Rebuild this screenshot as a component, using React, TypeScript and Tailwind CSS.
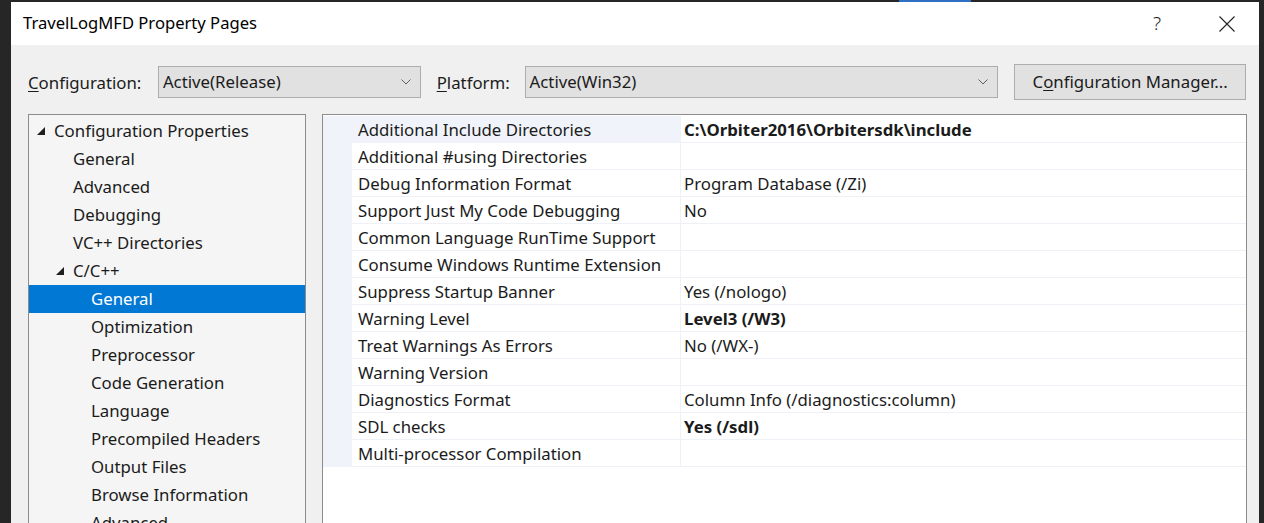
import React from 'react'

const font = { fontFamily: '"Noto Sans", "Open Sans", sans-serif' }

type TreeItem = { label: string; level: number; expanded?: boolean; selected?: boolean }

const tree: TreeItem[] = [
  { label: 'Configuration Properties', level: 0, expanded: true },
  { label: 'General', level: 1 },
  { label: 'Advanced', level: 1 },
  { label: 'Debugging', level: 1 },
  { label: 'VC++ Directories', level: 1 },
  { label: 'C/C++', level: 1, expanded: true },
  { label: 'General', level: 2, selected: true },
  { label: 'Optimization', level: 2 },
  { label: 'Preprocessor', level: 2 },
  { label: 'Code Generation', level: 2 },
  { label: 'Language', level: 2 },
  { label: 'Precompiled Headers', level: 2 },
  { label: 'Output Files', level: 2 },
  { label: 'Browse Information', level: 2 },
  { label: 'Advanced', level: 2 },
]

const props = [
  { name: 'Additional Include Directories', value: 'C:\\Orbiter2016\\Orbitersdk\\include', bold: true, active: true },
  { name: 'Additional #using Directories', value: '' },
  { name: 'Debug Information Format', value: 'Program Database (/Zi)' },
  { name: 'Support Just My Code Debugging', value: 'No' },
  { name: 'Common Language RunTime Support', value: '' },
  { name: 'Consume Windows Runtime Extension', value: '' },
  { name: 'Suppress Startup Banner', value: 'Yes (/nologo)' },
  { name: 'Warning Level', value: 'Level3 (/W3)', bold: true },
  { name: 'Treat Warnings As Errors', value: 'No (/WX-)' },
  { name: 'Warning Version', value: '' },
  { name: 'Diagnostics Format', value: 'Column Info (/diagnostics:column)' },
  { name: 'SDL checks', value: 'Yes (/sdl)', bold: true },
  { name: 'Multi-processor Compilation', value: '' },
]

function Chevron() {
  return (
    <svg width="10" height="6" viewBox="0 0 10 6" className="shrink-0">
      <path d="M0.5 0.5 L5 5 L9.5 0.5" fill="none" stroke="#606060" strokeWidth="1" />
    </svg>
  )
}

function Expander() {
  return (
    <svg width="8" height="8" viewBox="0 0 8 8" className="shrink-0">
      <path d="M8 0 L8 8 L0 8 Z" fill="#1e1e1e" />
    </svg>
  )
}

function Combo({ text, width }: { text: string; width: string }) {
  return (
    <div className={`flex h-[32px] ${width} items-center justify-between border border-[#adadad] bg-[#e1e1e1] pl-[4px] pr-[9px]`}>
      <span>{text}</span>
      <Chevron />
    </div>
  )
}

export default function App() {
  return (
    <div className="flex h-[523px] w-[1264px] flex-col overflow-hidden bg-[#262626] text-[16.8px] text-[#1b1b1b]" style={font}>
      {/* top edge of the IDE behind */}
      <div className="flex h-[2px] shrink-0">
        <div className="w-[899px]" />
        <div className="w-[72px] bg-[#2f6fc4]" />
      </div>

      <div className="flex min-h-0 flex-1">
        <div className="w-[11px] shrink-0" />

        {/* Dialog */}
        <div className="flex min-w-0 flex-1 flex-col bg-[#f0f0f0]">
          {/* Title bar */}
          <div className="flex h-[43px] shrink-0 items-center bg-white pl-[12px]">
            <span className="flex-1 text-[16.6px] text-black">TravelLogMFD Property Pages</span>
            <span className="mr-[58px] text-[19px] font-light text-[#222]">?</span>
            <svg width="16" height="16" viewBox="0 0 16 16" className="mr-[24px]">
              <path d="M0.5 0.5 L15.5 15.5 M15.5 0.5 L0.5 15.5" stroke="#222" strokeWidth="1.1" />
            </svg>
          </div>

          {/* Configuration toolbar */}
          <div className="mt-[19px] flex h-[36px] shrink-0 items-center pl-[17px] pr-[13px]">
            <span className="w-[130px] pt-[1px]">
              <span className="underline underline-offset-2">C</span>onfiguration:
            </span>
            <Combo text="Active(Release)" width="w-[263px]" />
            <span className="ml-[16px] w-[88px] pt-[1px]">
              <span className="underline underline-offset-2">P</span>latform:
            </span>
            <Combo text="Active(Win32)" width="w-[474px]" />
            <div className="ml-[16px] flex h-[36px] w-[232px] items-center justify-center border border-[#adadad] bg-[#e1e1e1]">
              C<span className="underline underline-offset-2">o</span>nfiguration Manager...
            </div>
          </div>

          {/* Panels */}
          <div className="mt-[14px] flex min-h-0 flex-1 pl-[17px] pr-[12px]">
            {/* Tree */}
            <div className="w-[278px] shrink-0 border border-b-0 border-[#8c8c8c] bg-[#f5f5f5] pt-[2px]">
              {tree.map((t, i) => (
                <div
                  key={i}
                  className={`flex h-[28px] items-center ${t.selected ? 'bg-[#0078d4] text-white' : ''}`}
                  style={{ paddingLeft: t.level === 0 ? 8 : t.level === 1 ? 27 : 62 }}
                >
                  {t.expanded ? (
                    <span className="flex w-[17px] items-center">
                      <Expander />
                    </span>
                  ) : t.level === 1 ? (
                    <span className="w-[17px]" />
                  ) : null}
                  <span>{t.label}</span>
                </div>
              ))}
            </div>

            {/* Property grid */}
            <div className="ml-[16px] flex-1 border border-b-0 border-[#8c8c8c] bg-white pt-[1px]">
              {props.map((p, i) => (
                <div key={i} className="flex h-[27px]">
                  <div className="w-[29px] shrink-0 bg-[#f0f4fa]" />
                  <div
                    className={`flex w-[328px] shrink-0 items-center border-b border-[#eef1f6] pl-[6px] pt-[2px] ${p.active ? 'bg-[#f0f4fa]' : ''}`}
                  >
                    {p.name}
                  </div>
                  <div className="flex flex-1 items-center border-b border-l border-[#eef1f6] pl-[3px] pt-[2px]">
                    <span className={p.bold ? 'font-bold' : ''}>{p.value}</span>
                  </div>
                </div>
              ))}
            </div>
          </div>
        </div>

        <div className="w-[5px] shrink-0" />
      </div>
    </div>
  )
}
